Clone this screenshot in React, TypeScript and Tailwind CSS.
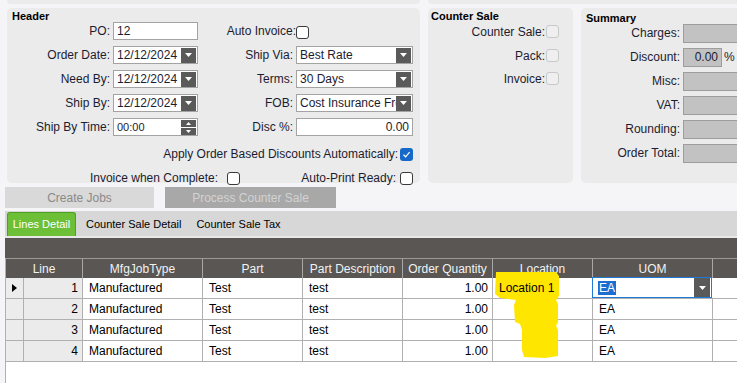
import React from 'react'

function Check({ checked = false, disabled = false }: { checked?: boolean; disabled?: boolean }) {
    if (checked) {
        return (
            <span className="w-[13px] h-[13px] rounded-[3px] bg-[#1769c9] flex items-center justify-center shrink-0">
                <svg width="9" height="9" viewBox="0 0 9 9">
                    <path d="M1.5 4.8 L3.6 6.8 L7.6 2.2" stroke="#fff" strokeWidth="1.2" fill="none" />
                </svg>
            </span>
        )
    }
    return (
        <span
            className={
                disabled
                    ? "block w-[13px] h-[13px] rounded-[3px] border border-[#c9c9c9] bg-[#efefef] shrink-0"
                    : "block w-[13px] h-[13px] rounded-[3px] border border-[#3a3a3a] bg-white shrink-0"
            }
        />
    )
}

function DropBtn() {
    return (
        <span className="w-[15px] h-[15px] bg-[#5a5a5a] flex items-center justify-center shrink-0">
            <svg width="7" height="4" viewBox="0 0 7 4">
                <path d="M0 0 L7 0 L3.5 4 Z" fill="#fff" />
            </svg>
        </span>
    )
}

function DropDown({ value, w }: { value: string; w: string }) {
    return (
        <div className={`${w} h-[18px] border border-[#a3a3a3] bg-white flex items-center pl-[3px] pr-[1px] overflow-hidden shrink-0`}>
            <span className="flex-1 whitespace-nowrap overflow-hidden">{value}</span>
            <DropBtn />
        </div>
    )
}

function Label({ text, w }: { text: string; w: string }) {
    return <div className={`${w} h-[18px] leading-[18px] text-right pr-[3px] whitespace-nowrap shrink-0`}>{text}</div>
}

const lines = [1, 2, 3, 4]

export default function App() {
    return (
        <div className="relative w-[737px] h-[383px] overflow-hidden bg-[#f5f5f7] font-['Liberation_Sans',Arial,sans-serif] text-[12px] text-[#1c1c30]">
            {/* strip of previous panels */}
            <div className="flex h-[4px]">
                <div className="ml-[7px] w-[413px] shrink-0 bg-[#ebebeb] rounded-b-[4px]" />
                <div className="ml-[8px] flex-1 bg-[#ebebeb] rounded-bl-[4px]" />
            </div>

            <div className="flex mt-[4px] h-[175px]">
                {/* Header */}
                <div className="ml-[7px] w-[413px] shrink-0 bg-[#ebebeb] rounded-[5px]">
                    <div className="h-[14px] leading-[14px] pl-[5px] pt-[1px] text-[11px] font-bold text-black">Header</div>
                    <div className="flex h-[24px] items-start">
                        <Label text="PO:" w="w-[106px]" />
                        <div className="w-[85px] h-[18px] border border-[#a3a3a3] bg-white pl-[3px] leading-[16px]">12</div>
                        <div className="w-[98px] h-[18px] leading-[18px] text-right whitespace-nowrap">Auto Invoice:</div>
                        <div className="h-[18px] flex items-center pt-[2px]"><Check /></div>
                    </div>
                    {["Order Date:", "Need By:", "Ship By:"].map((l, i) => (
                        <div key={l} className="flex h-[24px] items-start">
                            <Label text={l} w="w-[106px]" />
                            <DropDown value="12/12/2024" w="w-[85px]" />
                            <Label text={["Ship Via:", "Terms:", "FOB:"][i]} w="w-[98px]" />
                            <DropDown value={["Best Rate", "30 Days", "Cost Insurance Freight"][i]} w="w-[117px]" />
                        </div>
                    ))}
                    <div className="flex h-[24px] items-start">
                        <Label text="Ship By Time:" w="w-[106px]" />
                        <div className="w-[85px] h-[18px] border border-[#a3a3a3] bg-white flex items-center pl-[3px] pr-[1px]">
                            <span className="flex-1 text-[11px]">00:00</span>
                            <span className="w-[15px] h-[15px] flex flex-col gap-[1px]">
                                <span className="flex-1 bg-[#5a5a5a] flex items-center justify-center">
                                    <svg width="5" height="3" viewBox="0 0 5 3"><path d="M0 3 L5 3 L2.5 0 Z" fill="#fff" /></svg>
                                </span>
                                <span className="flex-1 bg-[#5a5a5a] flex items-center justify-center">
                                    <svg width="5" height="3" viewBox="0 0 5 3"><path d="M0 0 L5 0 L2.5 3 Z" fill="#fff" /></svg>
                                </span>
                            </span>
                        </div>
                        <Label text="Disc %:" w="w-[98px]" />
                        <div className="w-[117px] h-[18px] border border-[#a3a3a3] bg-white text-right pr-[3px] leading-[16px]">0.00</div>
                    </div>
                    <div className="flex h-[24px] items-center justify-end pr-[7px] gap-[2px]">
                        <span>Apply Order Based Discounts Automatically:</span>
                        <Check checked />
                    </div>
                    <div className="flex h-[24px] items-center">
                        <div className="w-[211px] text-right">Invoice when Complete:</div>
                        <div className="ml-[9px] flex"><Check /></div>
                        <div className="flex-1 flex justify-end items-center gap-[4px] pr-[7px]">
                            <span>Auto-Print Ready:</span>
                            <Check />
                        </div>
                    </div>
                </div>

                {/* Counter Sale */}
                <div className="ml-[8px] w-[145px] shrink-0 bg-[#ebebeb] rounded-[5px]">
                    <div className="h-[14px] leading-[14px] pl-[3px] pt-[1px] text-[11px] font-bold text-black">Counter Sale</div>
                    <div className="pt-[3px]">
                        {["Counter Sale:", "Pack:", "Invoice:"].map((l) => (
                            <div key={l} className="flex h-[23.5px] items-start justify-end pr-[14px] gap-[1px]">
                                <span className="leading-[14px]">{l}</span>
                                <Check disabled />
                            </div>
                        ))}
                    </div>
                </div>

                {/* Summary */}
                <div className="ml-[8px] flex-1 min-w-0 overflow-hidden bg-[#ebebeb] rounded-l-[5px]">
                    <div className="h-[16px] leading-[16px] pl-[5px] pt-[2px] text-[11px] font-bold text-black">Summary</div>
                    {["Charges:", "Discount:", "Misc:", "VAT:", "Rounding:", "Order Total:"].map((l) => (
                        <div key={l} className="flex h-[24px] items-start">
                            <div className="w-[102px] shrink-0 h-[19px] leading-[19px] text-right pr-[3px] whitespace-nowrap">{l}</div>
                            {l === "Discount:" ? (
                                <>
                                    <div className="w-[39px] shrink-0 h-[19px] border border-[#9d9d9d] bg-[#c2c2c2] text-right pr-[3px] leading-[17px]">0.00</div>
                                    <span className="ml-[2px] leading-[19px]">%</span>
                                </>
                            ) : (
                                <div className="w-[70px] shrink-0 h-[19px] border border-[#9d9d9d] bg-[#c2c2c2]" />
                            )}
                        </div>
                    ))}
                </div>
            </div>

            {/* buttons */}
            <div className="flex mt-[4px] h-[21px] ml-[5px]">
                <div className="w-[149px] bg-[#d9d9d9] text-[#8a8a8a] flex items-center justify-center">Create Jobs</div>
                <div className="ml-[11px] w-[171px] bg-[#a8a8a8] text-[#d3d3d3] flex items-center justify-center">Process Counter Sale</div>
            </div>

            {/* tabs */}
            <div className="mt-[3px] ml-[5px] h-[25px] bg-[#d7d7d7] flex items-end text-[11px] text-black">
                <div className="ml-[2px] w-[69px] h-[24px] bg-[#6cbf37] border border-[#4f9f22] border-b-0 rounded-t-[3px] text-white flex items-center justify-center">Lines Detail</div>
                <div className="ml-[10px] h-[24px] flex items-center">Counter Sale Detail</div>
                <div className="ml-[15px] h-[24px] flex items-center">Counter Sale Tax</div>
            </div>
            <div className="ml-[5px] h-[2px] bg-[#e8e8e8]" />
            <div className="ml-[5px] h-[20px] bg-[#595653]" />

            {/* grid */}
            <div className="ml-[5px] border-l border-[#b0b0b0] bg-white h-[125px]">
                <div className="flex h-[20px] bg-[#595653] text-[#f2f2f2] border-t border-[#9a9a9a]">
                    <div className="w-[77px] flex items-center justify-center border-r border-[#a8a8a8]">Line</div>
                    <div className="w-[120px] flex items-center justify-center border-r border-[#a8a8a8]">MfgJobType</div>
                    <div className="w-[100px] flex items-center justify-center border-r border-[#a8a8a8]">Part</div>
                    <div className="w-[100px] flex items-center justify-center border-r border-[#a8a8a8]">Part Description</div>
                    <div className="w-[90px] flex items-center justify-center border-r border-[#a8a8a8]">Order Quantity</div>
                    <div className="w-[100px] flex items-center justify-center border-r border-[#a8a8a8]">Location</div>
                    <div className="w-[120px] flex items-center justify-center border-r border-[#a8a8a8]">UOM</div>
                    <div className="flex-1" />
                </div>
                {lines.map((n) => (
                    <div key={n} className="flex h-[21px] border-b border-[#b0b0b0] text-black">
                        <div className="w-[18px] bg-[#ececec] border-r border-[#b0b0b0] flex items-center justify-center">
                            {n === 1 && (
                                <svg width="5" height="8" viewBox="0 0 5 8"><path d="M0 0 L5 4 L0 8 Z" fill="#000" /></svg>
                            )}
                        </div>
                        <div className="w-[59px] bg-[#ebebeb] border-r border-[#b0b0b0] text-right pr-[4px] leading-[20px]">{n}</div>
                        <div className="w-[120px] border-r border-[#b0b0b0] pl-[6px] leading-[20px]">Manufactured</div>
                        <div className="w-[100px] border-r border-[#b0b0b0] pl-[6px] leading-[20px]">Test</div>
                        <div className="w-[100px] border-r border-[#b0b0b0] pl-[6px] leading-[20px]">test</div>
                        <div className="w-[90px] border-r border-[#b0b0b0] text-right pr-[4px] leading-[20px]">1.00</div>
                        <div className="w-[100px] border-r border-[#b0b0b0] pl-[6px] leading-[20px]">
                            {n === 1 && <span className="relative z-20">Location 1</span>}
                        </div>
                        {n === 1 ? (
                            <div className="w-[120px] border border-[#1f7ad6] -mt-px -ml-px flex items-center pl-[5px] pr-[1px]">
                                <span className="bg-[#1b6fd1] text-white leading-[14px] px-[1px]">EA</span>
                                <span className="flex-1" />
                                <span className="w-[16px] h-[19px] bg-[#5a5a5a] flex items-center justify-center">
                                    <svg width="7" height="4" viewBox="0 0 7 4"><path d="M0 0 L7 0 L3.5 4 Z" fill="#fff" /></svg>
                                </span>
                            </div>
                        ) : (
                            <div className="w-[120px] border-r border-[#b0b0b0] pl-[6px] leading-[20px]">EA</div>
                        )}
                        <div className="flex-1" />
                    </div>
                ))}
            </div>

            {/* highlighter mark */}
            <svg className="absolute left-0 top-0 z-10 pointer-events-none" width="737" height="383" viewBox="0 0 737 383">
                <path
                    d="M496 272 L556 272 L559 276 L559 296 L556 300 L558 304 L558 322 L556 326 L558 330 L558 356 L545 358 L524 357 L522 350 L522 330 L520 324 L515 322 L514 305 L516 300 L500 298 L495 294 Z"
                    fill="#ffe600"
                />
            </svg>
        </div>
    )
}
